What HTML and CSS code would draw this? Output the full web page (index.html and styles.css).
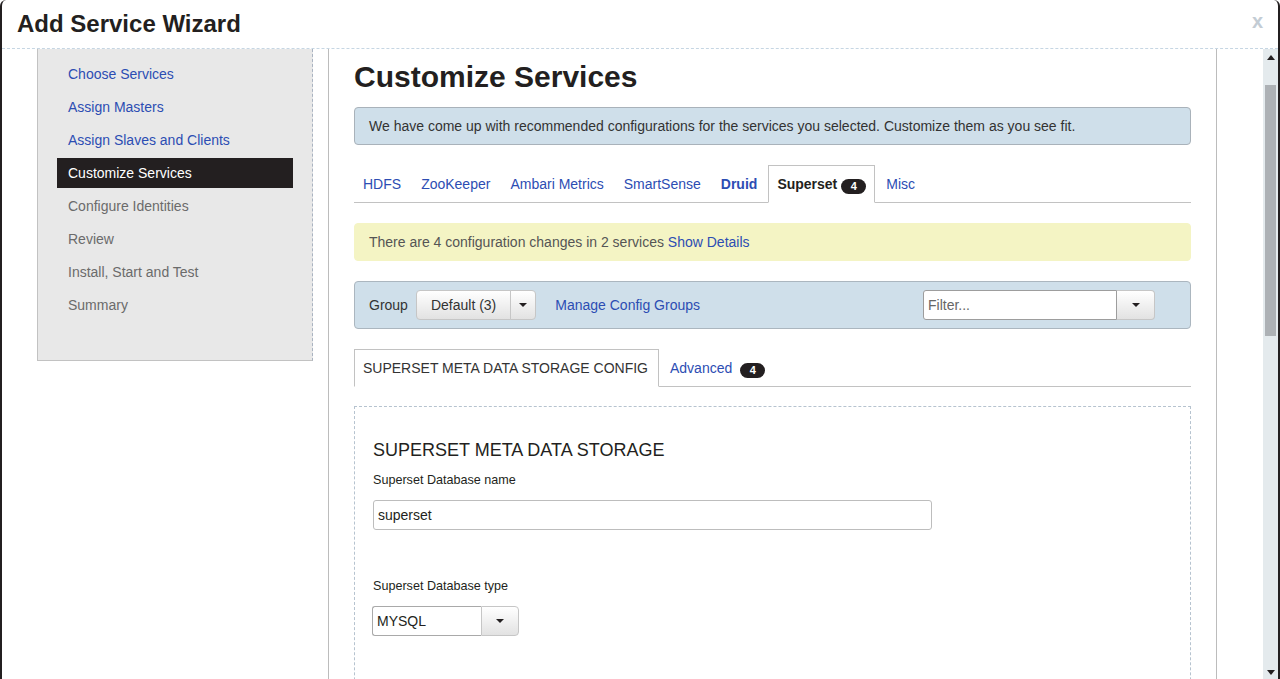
FILE: index.html
```html
<!DOCTYPE html>
<html>
<head>
<meta charset="utf-8">
<title>Add Service Wizard</title>
<link rel="stylesheet" href="styles.css">
</head>
<body>
<div class="modal">
  <div class="modal-header">
    <h2 class="modal-title">Add Service Wizard</h2>
    <span class="close">x</span>
  </div>
  <div class="modal-body">
    <div class="sidebar">
      <ul class="steps">
        <li class="step done">Choose Services</li>
        <li class="step done">Assign Masters</li>
        <li class="step done">Assign Slaves and Clients</li>
        <li class="step active">Customize Services</li>
        <li class="step">Configure Identities</li>
        <li class="step">Review</li>
        <li class="step">Install, Start and Test</li>
        <li class="step">Summary</li>
      </ul>
    </div>
    <div class="main">
      <h1 class="page-title">Customize Services</h1>
      <div class="alert alert-info">We have come up with recommended configurations for the services you selected. Customize them as you see fit.</div>
      <ul class="tabs service-tabs">
        <li><a class="tab">HDFS</a></li>
        <li><a class="tab">ZooKeeper</a></li>
        <li><a class="tab">Ambari Metrics</a></li>
        <li><a class="tab">SmartSense</a></li>
        <li><a class="tab tab-bold">Druid</a></li>
        <li><a class="tab tab-active tab-bold">Superset <span class="badge">4</span></a></li>
        <li><a class="tab">Misc</a></li>
      </ul>
      <div class="alert alert-warning">There are 4 configuration changes in 2 services <a class="link">Show Details</a></div>
      <div class="group-bar">
        <span class="group-label">Group</span>
        <div class="btn-group">
          <span class="btn btn-main">Default (3)</span>
          <span class="btn btn-caret"><span class="caret"></span></span>
        </div>
        <a class="link manage-link">Manage Config Groups</a>
        <div class="filter">
          <span class="filter-input">Filter...</span>
          <span class="btn filter-btn"><span class="caret"></span></span>
        </div>
      </div>
      <ul class="tabs sub-tabs">
        <li><a class="tab tab-active tab-plain">SUPERSET META DATA STORAGE CONFIG</a></li>
        <li><a class="tab">Advanced<span class="badge badge-gap">4</span></a></li>
      </ul>
      <div class="panel">
        <h3 class="panel-title">SUPERSET META DATA STORAGE</h3>
        <label class="field-label">Superset Database name</label>
        <div class="text-input">superset</div>
        <label class="field-label field-label-second">Superset Database type</label>
        <div class="select">
          <span class="select-value">MYSQL</span>
          <span class="btn select-btn"><span class="caret"></span></span>
        </div>
      </div>
    </div>
    <div class="spacer"></div>
    <div class="scrollbar">
      <div class="sb-arrow"><span class="tri-up"></span></div>
      <div class="sb-thumb"></div>
      <div class="sb-fill"></div>
      <div class="sb-arrow sb-arrow-down"><span class="tri-down"></span></div>
    </div>
  </div>
</div>
</body>
</html>
```
FILE: styles.css
```css
* { box-sizing: border-box; }
html, body { margin: 0; padding: 0; background: #fff; }
body {
  font-family: "Liberation Sans", Arial, sans-serif;
  font-size: 14px;
  color: #333;
  overflow: hidden;
}
.modal {
  width: 1280px;
  height: 679px;
  border-left: 2px solid #231f20;
  border-right: 2px solid #231f20;
  border-top-left-radius: 6px;
  border-top-right-radius: 6px;
  overflow: hidden;
  display: flex;
  flex-direction: column;
  background: #fff;
}
.modal-header {
  height: 49px;
  flex: none;
  border-bottom: 1px dashed #c6d6e3;
  padding: 11px 15px 0 15px;
  display: flex;
  justify-content: space-between;
  align-items: flex-start;
}
.modal-title {
  margin: 0;
  font-size: 24px;
  line-height: 26px;
  font-weight: bold;
  color: #231f20;
}
.close {
  font-size: 20px;
  line-height: 20px;
  font-weight: bold;
  color: #c3ccd4;
}
.modal-body {
  flex: 1;
  display: flex;
  overflow: hidden;
  padding-left: 35px;
}
.sidebar {
  flex: none;
  width: 276px;
  height: 312px;
  background: #e8e8e8;
  border: 1px solid #c2c2c2;
  border-top: none;
  border-right: 1px dashed #a9b3c1;
}
.steps {
  list-style: none;
  margin: 0;
  padding: 10px 0 0 19px;
}
.step {
  width: 236px;
  height: 30px;
  line-height: 30px;
  padding-left: 11px;
  margin-bottom: 3px;
  color: #6b6b6b;
  font-size: 14px;
}
.step.done { color: #2c4db3; }
.step.active { background: #231f20; color: #fff; }

.main {
  flex: none;
  width: 889px;
  border-left: 1px solid #bcbcbc;
  border-right: 1px solid #bcbcbc;
  padding: 0 25px;
  margin-left: 15px;
}
.page-title {
  margin: 11px 0 0;
  font-size: 30px;
  line-height: 34px;
  font-weight: bold;
  color: #231f20;
}
.alert {
  height: 38px;
  padding: 8px 14px;
  line-height: 20px;
  border: 1px solid transparent;
  border-radius: 4px;
}
.alert-info {
  margin-top: 13px;
  background: #cfdfea;
  border-color: #a9b2ba;
  color: #333;
}
.alert-warning {
  margin-top: 20px;
  background: #f4f4c4;
  border-color: #f4f4c4;
  color: #555;
}
.link { color: #2c4db3; }

.tabs {
  list-style: none;
  margin: 20px 0 0;
  padding: 0;
  display: flex;
  border-bottom: 1px solid #c2c2c2;
}
.tabs li { margin-right: 2px; margin-bottom: -1px; }
.tab {
  display: block;
  padding: 8px;
  line-height: 20px;
  border: 1px solid transparent;
  color: #2c4db3;
  font-size: 14px;
}
.tab-bold { font-weight: bold; }
.tab-active {
  background: #fff;
  border-color: #c2c2c2 #c2c2c2 #fff;
  color: #231f20;
}
.tab-plain { font-weight: normal; color: #333; padding-right: 10px; }
.badge {
  display: inline-block;
  height: 15px;
  line-height: 15px;
  padding: 0 9.5px;
  border-radius: 8px;
  background: #231f20;
  color: #fff;
  font-size: 11px;
  font-weight: bold;
  vertical-align: 0;
  position: relative;
  top: 1px;
}
.badge-gap { margin-left: 8px; }

.group-bar {
  margin-top: 20px;
  height: 48px;
  background: #cfdfea;
  border: 1px solid #abb6bf;
  border-radius: 4px;
  display: flex;
  align-items: center;
  padding: 0 35px 0 14px;
}
.group-label { margin-right: 8px; color: #333; }
.btn-group { display: flex; height: 30px; }
.btn {
  display: flex;
  align-items: center;
  justify-content: center;
  height: 30px;
  background: linear-gradient(#ffffff, #e2e2e2);
  border: 1px solid #c6c6c6;
  color: #333;
  font-size: 14px;
}
.btn-main {
  padding: 0 14px;
  border-radius: 4px 0 0 4px;
}
.btn-caret {
  width: 26px;
  margin-left: -1px;
  border-radius: 0 4px 4px 0;
}
.caret {
  display: block;
  width: 0;
  height: 0;
  border-left: 4px solid transparent;
  border-right: 4px solid transparent;
  border-top: 4px solid #231f20;
}
.manage-link { margin-left: 19px; }
.filter { margin-left: auto; display: flex; height: 30px; }
.filter-input {
  width: 194px;
  height: 30px;
  line-height: 28px;
  border: 1px solid #9d9d9d;
  border-radius: 3px 0 0 3px;
  background: #fff;
  padding: 0 4px;
  color: #666;
}
.filter-btn {
  width: 38px;
  border-left: none;
  border-radius: 0 4px 4px 0;
}

.panel {
  margin-top: 19px;
  height: 400px;
  border: 1px dashed #b6c3cf;
  padding: 31px 18px 0;
}
.panel-title {
  margin: 0 0 9px;
  font-size: 18px;
  line-height: 24px;
  font-weight: normal;
  color: #231f20;
}
.field-label {
  display: block;
  font-size: 12.6px;
  line-height: 18px;
  margin-bottom: 11px;
  color: #231f20;
}
.field-label-second { margin-top: 47px; }
.text-input {
  width: 559px;
  height: 30px;
  line-height: 28px;
  border: 1px solid #bdbdbd;
  border-radius: 3px;
  padding: 0 4px;
  color: #231f20;
}
.select { display: flex; height: 30px; margin-left: -1px; }
.select-value {
  width: 109px;
  height: 30px;
  line-height: 28px;
  border: 1px solid #a9a9a9;
  border-right: none;
  border-radius: 3px 0 0 3px;
  padding: 0 4px;
  color: #231f20;
}
.select-btn {
  width: 38px;
  border-radius: 0 4px 4px 0;
}

.spacer { flex: 1; }
.scrollbar {
  flex: none;
  width: 15px;
  background: #e4eaed;
  display: flex;
  flex-direction: column;
  align-items: center;
}
.sb-arrow {
  height: 16px;
  width: 100%;
  display: flex;
  align-items: center;
  justify-content: center;
  flex: none;
}
.sb-arrow-down { height: 14px; }
.tri-up {
  width: 0; height: 0;
  border-left: 4px solid transparent;
  border-right: 4px solid transparent;
  border-bottom: 5px solid #231f20;
}
.tri-down {
  width: 0; height: 0;
  border-left: 4px solid transparent;
  border-right: 4px solid transparent;
  border-top: 5px solid #231f20;
}
.sb-thumb {
  flex: none;
  margin-top: 20px;
  width: 11px;
  height: 251px;
  background: #adb1b5;
}
.sb-fill { flex: 1; }
```
